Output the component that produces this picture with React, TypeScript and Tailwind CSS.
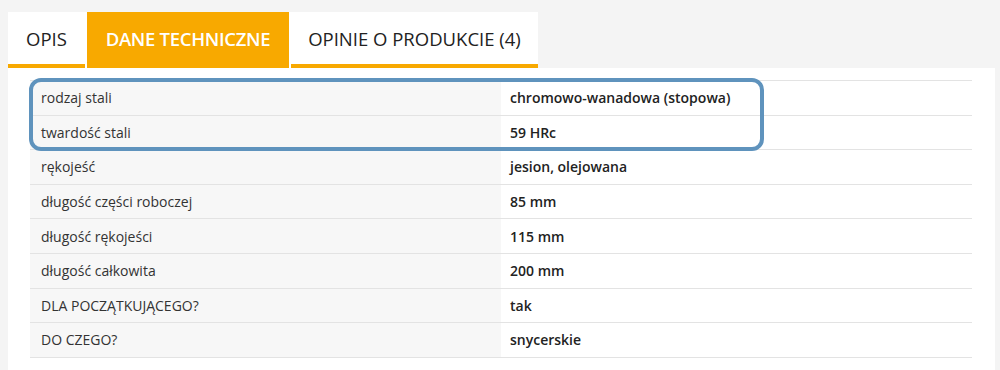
import { useState } from "react";

type Spec = { label: string; value: string };

const specs: Spec[] = [
  { label: "rodzaj stali", value: "chromowo-wanadowa (stopowa)" },
  { label: "twardość stali", value: "59 HRc" },
  { label: "rękojeść", value: "jesion, olejowana" },
  { label: "długość części roboczej", value: "85 mm" },
  { label: "długość rękojeści", value: "115 mm" },
  { label: "długość całkowita", value: "200 mm" },
  { label: "DLA POCZĄTKUJĄCEGO?", value: "tak" },
  { label: "DO CZEGO?", value: "snycerskie" },
];

const tabs = [
  { id: "opis", label: "OPIS", width: "w-[77px]" },
  { id: "dane", label: "DANE TECHNICZNE", width: "w-[202px]" },
  { id: "opinie", label: "OPINIE O PRODUKCIE (4)", width: "w-[247px]" },
];

export default function App() {
  const [active, setActive] = useState("dane");

  return (
    <div className="h-[370px] overflow-hidden bg-[#f4f4f4] pt-3 pl-2 pr-[5px] font-['Open_Sans','Liberation_Sans',sans-serif] text-[#222]">
      <div className="flex w-fit gap-[2px] bg-white">
        {tabs.map((tab) => (
          <button
            className={
              tab.id === active
                ? `${tab.width} flex h-[56px] items-center justify-center bg-[#f8a900] pb-[2px] text-[18.5px] font-semibold tracking-[-0.3px] text-white`
                : `${tab.width} flex h-[56px] items-center justify-center border-b-4 border-[#f8a900] pt-[2px] text-[18.5px] text-[#222]`
            }
            key={tab.id}
            onClick={() => setActive(tab.id)}
            type="button"
          >
            {tab.label}
          </button>
        ))}
      </div>

      <div className="h-full bg-white px-[22px] pt-3 pr-[23px]">
        <div className="relative">
          <table className="w-full border-collapse text-[14px]">
            <tbody>
              {specs.map((spec) => (
                <tr className="h-[34.6px] border-y border-[#e3e3e3]" key={spec.label}>
                  <td className="w-1/2 bg-[#f7f7f7] px-[11px] text-[#333]">{spec.label}</td>
                  <td className="w-1/2 px-[9px] font-semibold text-[#222]">{spec.value}</td>
                </tr>
              ))}
            </tbody>
          </table>
          <div className="pointer-events-none absolute top-[-2px] left-[-1px] h-[73px] w-[735px] rounded-[12px] border-4 border-[#5f93bd]" />
        </div>
      </div>
    </div>
  );
}
